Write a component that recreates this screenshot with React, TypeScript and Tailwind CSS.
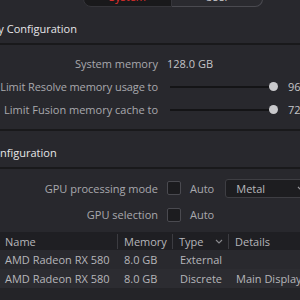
import React from "react";

function Label({ children }: { children: React.ReactNode }) {
  return (
    <div className="flex w-[158px] shrink-0 justify-end whitespace-nowrap">
      <span>{children}</span>
    </div>
  );
}

function Slider({ value }: { value: string }) {
  return (
    <>
      <div className="ml-[12px] flex h-[9px] w-[108px] shrink-0 items-center">
        <div className="h-[2px] flex-1 bg-[#141416]" />
        <div className="h-[9px] w-[9px] shrink-0 rounded-full bg-[#c9c9cc]" />
      </div>
      <span className="ml-[10px] whitespace-nowrap text-[#c4c4c8]">{value}</span>
    </>
  );
}

function Check() {
  return <div className="ml-[9px] h-[14px] w-[14px] shrink-0 rounded-[2px] border border-[#4a4a50] bg-[#1c1c1f]" />;
}

export default function App() {
  return (
    <div className="h-[300px] w-[300px] overflow-hidden bg-[#28282d] font-['Open_Sans',sans-serif] text-[11px] leading-[15px] text-[#a9a9ae]">
      {/* tabs */}
      <div className="flex h-[7px] items-end">
        <div className="ml-[83px] flex h-[23px] shrink-0">
          <div className="flex w-[89px] items-end justify-center rounded-bl-[8px] border border-[#35353a] bg-[#19191b] pb-[2px] text-[#e5302d]">
            System
          </div>
          <div className="flex w-[91px] items-end justify-center rounded-br-[8px] border border-l-0 border-[#4a4a50] bg-[#2a2a2f] pb-[2px] text-[#cfcfd2]">
            User
          </div>
        </div>
      </div>

      {/* Memory configuration */}
      <div className="flex h-[36px] items-end pb-[7px]">
        <div className="-ml-[39px] whitespace-nowrap text-[#e6e6e8]">Memory Configuration</div>
      </div>
      <div className="h-[2px] bg-[#19191b]" />
      <div className="flex flex-col pt-[7px] pb-[8px]">
        <div className="flex h-[23px] items-center">
          <Label>System memory</Label>
          <span className="ml-[9px] whitespace-nowrap text-[#c4c4c8]">128.0 GB</span>
        </div>
        <div className="flex h-[23px] items-center">
          <Label>
            <span className="tracking-[-0.08px]">Limit Resolve memory usage to</span>
          </Label>
          <Slider value="96" />
        </div>
        <div className="flex h-[23px] items-center">
          <Label>Limit Fusion memory cache to</Label>
          <Slider value="72" />
        </div>
      </div>
      <div className="h-[2px] bg-[#19191b]" />

      {/* GPU configuration */}
      <div className="flex h-[36px] items-end pb-[7px]">
        <div className="-ml-[39px] whitespace-nowrap text-[#e6e6e8]">GPU Configuration</div>
      </div>
      <div className="h-[2px] bg-[#19191b]" />
      <div className="flex flex-col gap-[6.5px] pt-[9px]">
        <div className="flex h-[20px] items-center">
          <Label>GPU processing mode</Label>
          <Check />
          <span className="ml-[9px]">Auto</span>
          <div className="ml-[11px] flex h-[19px] w-[91px] shrink-0 items-center justify-between rounded-[3px] border border-[#3e3e43] bg-[#1d1d20] pl-[10px] pr-[10px] text-[#b8b8bc]">
            <span>Metal</span>
            <svg width="8" height="5" viewBox="0 0 8 5" fill="none" stroke="#9a9a9e" strokeWidth="1.2">
              <path d="M1 1l3 3 3-3" />
            </svg>
          </div>
        </div>
        <div className="flex h-[20px] items-center">
          <Label>GPU selection</Label>
          <Check />
          <span className="ml-[9px]">Auto</span>
        </div>
      </div>

      {/* table */}
      <div className="mt-[7.5px] text-[#b6b6ba]">
        <div className="flex h-[18px] items-center bg-[#1f1f23]">
          <div className="w-[118px] shrink-0 border-r border-[#3c3c41] pl-[5px]">Name</div>
          <div className="w-[55px] shrink-0 border-r border-[#3c3c41] pl-[6px]">Memory</div>
          <div className="flex w-[56px] shrink-0 items-center justify-between border-r border-[#3c3c41] pl-[6px] pr-[5px]">
            <span>Type</span>
            <svg width="8" height="5" viewBox="0 0 8 5" fill="none" stroke="#8a8a8e" strokeWidth="1.1">
              <path d="M1 1l3 3 3-3" />
            </svg>
          </div>
          <div className="whitespace-nowrap pl-[6px]">Details</div>
        </div>
        <div className="flex h-[19px] items-center whitespace-nowrap bg-[#29292e]">
          <div className="w-[118px] shrink-0 pl-[5px]">AMD Radeon RX 580</div>
          <div className="w-[55px] shrink-0 pl-[6px]">8.0 GB</div>
          <div className="w-[56px] shrink-0 pl-[7px]">External</div>
          <div className="pl-[7px]"></div>
        </div>
        <div className="flex h-[19px] items-center whitespace-nowrap bg-[#2c2c31]">
          <div className="w-[118px] shrink-0 pl-[5px]">AMD Radeon RX 580</div>
          <div className="w-[55px] shrink-0 pl-[6px]">8.0 GB</div>
          <div className="w-[56px] shrink-0 pl-[7px]">Discrete</div>
          <div className="pl-[7px]">Main Display</div>
        </div>
        <div className="h-[20px] bg-[#242428]" />
      </div>
    </div>
  );
}
